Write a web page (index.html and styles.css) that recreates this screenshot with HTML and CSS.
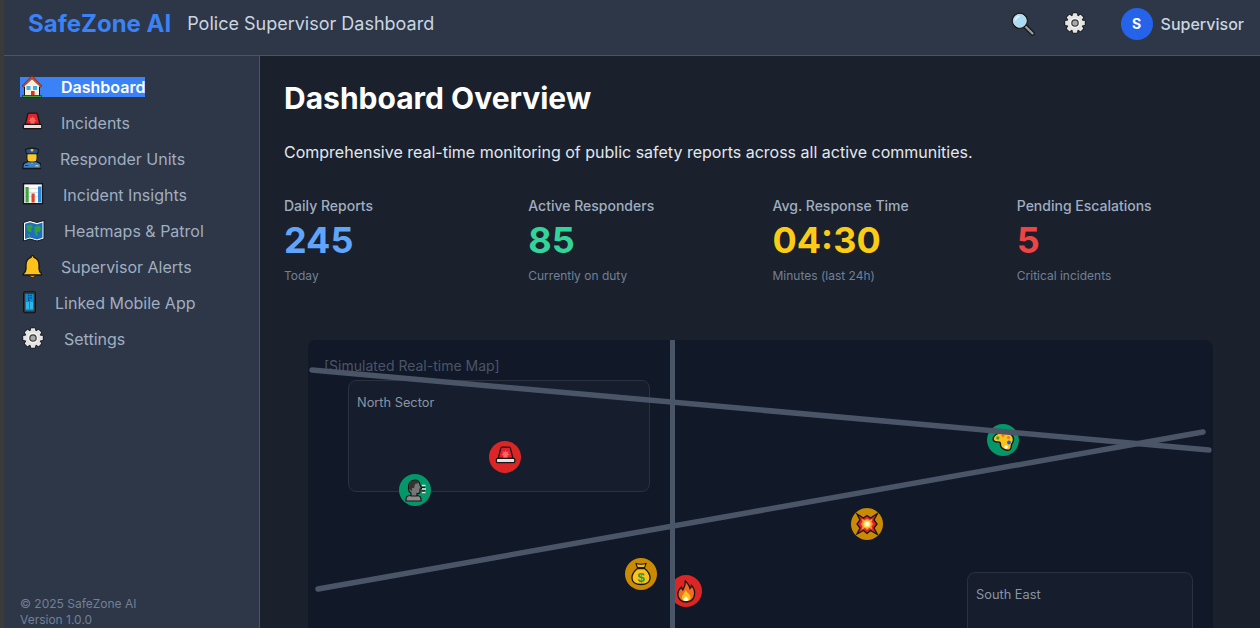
FILE: index.html
```html
<!DOCTYPE html>
<html lang="en">
<head>
<meta charset="utf-8">
<title>SafeZone AI</title>
<link rel="stylesheet" href="styles.css">
</head>
<body>
<svg class="defs" width="0" height="0" aria-hidden="true">
  <defs>
    <g id="gear-shape">
      <circle cx="0" cy="0" r="7.8"/>
      <rect x="-2.200" y="-9.800" width="4.400" height="19.600" rx=".8"/>
      <rect x="-2.200" y="-9.800" width="4.400" height="19.600" rx=".8" transform="rotate(45)"/>
      <rect x="-2.200" y="-9.800" width="4.400" height="19.600" rx=".8" transform="rotate(90)"/>
      <rect x="-2.200" y="-9.800" width="4.400" height="19.600" rx=".8" transform="rotate(135)"/>
    </g>
    <symbol id="i-gear" viewBox="0 0 24 24">
      <g transform="translate(13 11)">
        <use href="#gear-shape" fill="#161616" stroke="#161616" stroke-width="1.600"/>
        <use href="#gear-shape" fill="#e4e4e4"/>
        <circle r="5.200" fill="#f4f4f4"/>
        <circle r="3.800" fill="#3b3b3b"/>
        <circle r="2.600" fill="#a8a8a8"/>
      </g>
    </symbol>
    <symbol id="i-siren" viewBox="0 0 24 24">
      <path d="M5.200 13.500 L7.800 3.200 Q8 2.200 9 2.200 H16.200 Q17.200 2.200 17.400 3.200 L20 13.500 Z" fill="#e5222c" stroke="#161616" stroke-width="1.300"/>
      <path d="M12.500 5.200 l1 2 2-.6-.8 2 1.800 1.200-2 .6.200 2.800h-4.400l.2-2.800-2-.6 1.800-1.200-.8-2 2 .6z" fill="#f8665f"/>
      <rect x="3.400" y="13.400" width="18.400" height="4.200" rx="1.200" fill="#f4dbdb" stroke="#161616" stroke-width="1.300"/>
    </symbol>
  </defs>
</svg>
<div class="app">
  <header class="topbar">
    <div class="brand-group">
      <span class="brand">SafeZone AI</span>
      <span class="subtitle">Police Supervisor Dashboard</span>
    </div>
    <div class="top-actions">
      <svg class="top-search" viewBox="0 0 24 24" width="24" height="24" aria-hidden="true">
        <line x1="14" y1="14" x2="21.500" y2="21.500" stroke="#161616" stroke-width="4.600" stroke-linecap="round"/>
        <line x1="14.500" y1="14.500" x2="21.500" y2="21.500" stroke="#8f9aa3" stroke-width="2.400" stroke-linecap="round"/>
        <circle cx="8.800" cy="8.800" r="7.400" fill="#a9dcf5" stroke="#161616" stroke-width="1.300"/>
        <path d="M4.500 8.500 A4.500 4.500 0 0 1 8.500 4.500" fill="none" stroke="#e8f7ff" stroke-width="1.500"/>
        <circle cx="8.800" cy="8.800" r="6.500" fill="none" stroke="#d7d7d7" stroke-width=".8"/>
      </svg>
      <svg class="top-gear" width="24" height="24" aria-hidden="true"><use href="#i-gear"/></svg>
      <div class="user">
        <span class="avatar">S</span>
        <span class="user-name">Supervisor</span>
      </div>
    </div>
  </header>
  <div class="body-row">
    <aside class="sidebar">
      <nav class="nav">
        <a class="nav-item"><span class="nav-sel">
          <svg class="nav-icon icon-top" viewBox="0 0 22 24" width="22" height="24" aria-hidden="true">
            <rect x="4.500" y="9" width="15" height="12" fill="#fbefdc" stroke="#161616"/>
            <path d="M2 11 L12 .8 L22 11 L20.400 12 L12 4.200 L3.600 12 Z" fill="#c8492f" stroke="#7a2a1e" stroke-width=".8"/>
            <path d="M12 4.200 L20 11.800 H4 Z" fill="#fbefdc"/>
            <rect x="6.500" y="11" width="4" height="4" fill="#35b5ef"/>
            <rect x="13" y="11" width="4" height="4" fill="#35b5ef"/>
            <rect x="11" y="16" width="3.600" height="5" fill="#dc2e2e"/>
            <rect x="2.500" y="20.600" width="19" height="1.600" fill="#3fa535" stroke="#161616" stroke-width=".5"/>
          </svg>
          <span class="nav-label">Dashboard</span></span></a>
        <a class="nav-item">
          <svg class="nav-icon" width="22" height="24" viewBox="0 0 22 24" aria-hidden="true"><use href="#i-siren" width="24" height="24"/></svg>
          <span class="nav-label">Incidents</span></a>
        <a class="nav-item">
          <svg class="nav-icon" viewBox="0 0 21 24" width="21" height="24" aria-hidden="true">
            <path d="M3 21.500 V18.500 Q3 16 6 15.300 L9.500 14 H14.500 L18 15.300 Q21 16 21 18.500 V21.500 Z" fill="#3f83c4" stroke="#161616" stroke-width="1.300"/>
            <path d="M9.500 14 L12 17 L14.500 14" fill="#8cc4ef"/>
            <rect x="5" y="18" width="3.500" height="1" fill="#0f3f6e"/>
            <rect x="15.500" y="18" width="3" height="1.500" fill="#f6c12f"/>
            <rect x="7" y="5" width="10" height="10" rx="3" fill="#fcc72e" stroke="#161616" stroke-width=".9"/>
            <path d="M5.500 2.500 Q12 -.2 18.500 2.500 L17.500 6.800 H6.500 Z" fill="#24558f" stroke="#161616" stroke-width="1.100"/>
            <rect x="10.800" y="2" width="2.400" height="2.400" fill="#f4c430"/>
          </svg>
          <span class="nav-label">Responder Units</span></a>
        <a class="nav-item">
          <svg class="nav-icon" viewBox="0 0 24 24" width="24" height="24" aria-hidden="true">
            <rect x="3.500" y=".7" width="19" height="20" fill="#fafafa" stroke="#161616" stroke-width="1.400"/>
            <path d="M4 5.500H22M4 9.500H22M4 13.500H22" stroke="#c9c9c9" stroke-width=".6"/>
            <rect x="5.500" y="4" width="3.200" height="15.500" fill="#3aa63a"/>
            <rect x="11.500" y="10.500" width="3.200" height="9" fill="#e0442a"/>
            <rect x="18" y="3.500" width="3.400" height="16" fill="#2b87d8"/>
          </svg>
          <span class="nav-label">Incident Insights</span></a>
        <a class="nav-item">
          <svg class="nav-icon" viewBox="0 0 25 24" width="25" height="24" aria-hidden="true">
            <path d="M3.500 3.500 L10 1.500 L17 3.500 L24 1.500 V20 L17 22 L10 20 L3.500 22 Z" fill="#fff" stroke="#161616" stroke-width="1"/>
            <path d="M5 4.800 L10 3.200 L17 5.200 L22.500 3.500 V18.800 L17 20.400 L10 18.400 L5 20 Z" fill="#1c6fc0"/>
            <path d="M6.500 6.500 L11 5.500 L13 8 L11 10 L12 12.500 L9 13 L7 10 Z M14.500 8 L19 6.500 L21 9 L20 12.500 L17 13 L18 16.500 L15.500 17 L14.500 12 Z M8 15 L10 15.500 L9.500 18 L8 17.500 Z" fill="#32a13a"/>
          </svg>
          <span class="nav-label">Heatmaps &amp; Patrol</span></a>
        <a class="nav-item">
          <svg class="nav-icon" viewBox="0 0 22 24" width="22" height="24" aria-hidden="true">
            <path d="M12.500 .7 Q14 .7 14 2.500 Q19 4 19 10 V14 Q19 17 21.800 19 V20 H3.200 V19 Q6 17 6 14 V10 Q6 4 11 2.500 Q11 .7 12.500 .7 Z" fill="#fcc21b" stroke="#161616" stroke-width="1.300"/>
            <path d="M9.500 20.300 H15.500 Q15 22.700 12.500 22.700 Q10 22.700 9.500 20.300 Z" fill="#f08a1d" stroke="#161616" stroke-width=".8"/>
          </svg>
          <span class="nav-label">Supervisor Alerts</span></a>
        <a class="nav-item">
          <svg class="nav-icon" viewBox="0 0 16 24" width="16" height="24" aria-hidden="true">
            <rect x="3.600" y=".7" width="11.800" height="21" rx="1.800" fill="#3a3a3a" stroke="#111" stroke-width="1.100"/>
            <rect x="5.300" y="3" width="8.400" height="16.500" fill="#0a8fd8"/>
            <path d="M8 3.800h1.500v1.500H8zM10.500 3.800H12v1.500h-1.500zM8 6.200h1.500v1.500H8zM10.500 6.200H12v1.500h-1.500zM8 8.600h1.500v1.500H8z" fill="#0b3f68"/>
            <rect x="6" y="11" width="7" height="7" fill="#2bb7f0"/>
            <rect x="9.200" y="11" width=".8" height="7" fill="#0a6da8"/>
          </svg>
          <span class="nav-label">Linked Mobile App</span></a>
        <a class="nav-item">
          <svg class="nav-icon" width="25" height="24" aria-hidden="true"><use href="#i-gear" width="24" height="24"/></svg>
          <span class="nav-label">Settings</span></a>
      </nav>
      <div class="side-foot">
        <div>© 2025 SafeZone AI</div>
        <div>Version 1.0.0</div>
      </div>
    </aside>
    <main class="main">
      <h1 class="title">Dashboard Overview</h1>
      <p class="intro">Comprehensive real-time monitoring of public safety reports across all active communities.</p>
      <section class="stats">
        <div class="stat"><div class="stat-label">Daily Reports</div><div class="stat-value blue">245</div><div class="stat-note">Today</div></div>
        <div class="stat"><div class="stat-label">Active Responders</div><div class="stat-value green">85</div><div class="stat-note">Currently on duty</div></div>
        <div class="stat"><div class="stat-label">Avg. Response Time</div><div class="stat-value yellow">04:30</div><div class="stat-note">Minutes (last 24h)</div></div>
        <div class="stat"><div class="stat-label">Pending Escalations</div><div class="stat-value red">5</div><div class="stat-note">Critical incidents</div></div>
      </section>
      <section class="map">
        <div class="map-caption">[Simulated Real-time Map]</div>
        <div class="sector sector-north">North Sector</div>
        <div class="sector sector-east">South East</div>
        <span class="marker m-red m-1"><svg width="24" height="24" aria-hidden="true"><use href="#i-siren" width="24" height="24"/></svg></span>
        <span class="marker m-green m-2">
          <svg viewBox="0 0 24 24" width="24" height="24" aria-hidden="true">
            <path d="M3 23 V21 Q3 18 7 17.500 H14 Q18 18 18 21 V23 Z" fill="#8a8a8a" stroke="#161616" stroke-width="1.200"/>
            <path d="M5.500 11 Q4.500 2.500 12 2 Q16.500 2 17 7 L18.800 10.500 L17 11 V14 Q16.500 16 14 15.500 V18 H8 V15 Q5.500 13.500 5.500 11 Z" fill="#767676" stroke="#161616" stroke-width="1.200"/>
            <path d="M6 11 Q5 3.500 12 2.600 Q15 2.600 16 5 L12 6 L11 10 L9 10 L9 13 Z" fill="#333"/>
            <path d="M19 7.500 h3.500 M19 11 h4 M19 14.500 h3.500" stroke="#e6e6e6" stroke-width="1.400"/>
            <path d="M18.500 9.300 L22 9.300 M18.500 12.800 L22 12.800" stroke="#161616" stroke-width="1.200"/>
          </svg>
        </span>
        <span class="marker m-green m-3">
          <svg viewBox="0 0 24 24" width="24" height="24" aria-hidden="true">
            <path d="M12 4 C18 3.500 22.500 7 22.500 11.500 C22.500 14 21 15 20.500 17 C20 19.500 20.500 20 19 21.500 C17 23 13 22 10.500 19.500 C8.800 17.500 10 16 9 14.500 C7.800 13 5 15 3 13 C1 11 2.500 8.500 5 6.500 C7 5 9 4.200 12 4 Z" fill="#fcc21b" stroke="#161616" stroke-width="1.400"/>
            <circle cx="6.800" cy="10" r="1.700" fill="#37a63a"/>
            <circle cx="12" cy="7.500" r="1.500" fill="#ef7d1a"/>
            <circle cx="17.500" cy="9.500" r="1.500" fill="#ef7d1a"/>
            <circle cx="18" cy="14.500" r="1.900" fill="#1e5fd6"/>
            <circle cx="15" cy="19" r="1.700" fill="#fff"/>
          </svg>
        </span>
        <span class="marker m-amber m-4">
          <svg viewBox="0 0 24 24" width="24" height="24" aria-hidden="true">
            <path d="M2 2 L8.500 6 L12 3.500 L15.500 6 L22.500 1.500 L19 8 L22 12 L19 16 L22.500 22.500 L15.500 18.500 L12 21.500 L8.500 18.500 L2 22 L5 16 L2 12 L5 8 Z" fill="#e3222c" stroke="#161616" stroke-width="1.300"/>
            <path d="M6.500 7 L10 8 L12 6.500 L14.500 8 L17.500 7 L16.500 10 L18 12 L16.500 14.500 L17.500 17.500 L14.500 16 L12 18 L10 16 L6.500 17.500 L7.500 14.500 L6 12 L7.500 10 Z" fill="#fb9a2b"/>
            <circle cx="12" cy="12" r="3.600" fill="#fde25a"/>
            <circle cx="12" cy="12" r="2" fill="#fffbe6"/>
          </svg>
        </span>
        <span class="marker m-amber m-5">
          <svg viewBox="0 0 24 24" width="24" height="24" aria-hidden="true">
            <path d="M7 1.500 Q12 3 17 1.500 L15.500 6 H8.500 Z" fill="#f6b91b" stroke="#161616" stroke-width="1.100"/>
            <path d="M8.500 6.500 H15.500 Q21.500 11 21 16.500 Q20.500 22.500 12 22.500 Q3.500 22.500 3 16.500 Q2.500 11 8.500 6.500 Z" fill="#fcc21b" stroke="#161616" stroke-width="1.300"/>
            <rect x="8" y="5" width="8" height="1.600" fill="#161616"/>
            <text class="dollar" x="12" y="19.500" text-anchor="middle">$</text>
          </svg>
        </span>
        <span class="marker m-red m-6">
          <svg viewBox="0 0 24 24" width="24" height="24" aria-hidden="true">
            <path d="M11 1.500 C14 5 15.500 6.500 16 9.500 C17 8.500 17.500 7.500 17.500 6.500 C20.500 9.500 21 13 20.500 16 C19.500 21 16 23 12 23 C7.500 23 4 20 3.800 15.500 C3.600 11.500 6 9.500 7.500 8 C8 9.500 8 10.500 8.800 11 C10.500 8 12 5 11 1.500 Z" fill="#f26b21" stroke="#161616" stroke-width="1.300"/>
            <path d="M11.500 11 C13 14 16.500 15 16.500 18.500 C16.500 21 14.500 22 12 22 C9.500 22 7.800 20.500 7.800 18.500 C7.800 16 10.500 14.500 11.500 11 Z" fill="#fcc21b"/>
            <path d="M12 17 C13 18.500 14.500 19.500 14.500 20.800 C14 21.800 13 22 12 22 C11 22 10 21.800 9.500 20.800 C9.500 19.500 11.500 18.500 12 17 Z" fill="#fff8e0"/>
          </svg>
        </span>
        <svg class="roads" viewBox="0 0 905 400" width="905" height="400" aria-hidden="true">
          <line x1="4" y1="30" x2="901" y2="110"/>
          <line x1="10" y1="249" x2="895" y2="92"/>
          <line class="road-v" x1="364.500" y1="0" x2="364.500" y2="400"/>
        </svg>
      </section>
    </main>
  </div>
</div>
</body>
</html>
```
FILE: styles.css
```css
* { box-sizing: border-box; }
html, body { margin: 0; height: 100%; overflow: hidden; }
body {
  font-family: Inter, "Noto Sans", sans-serif;
  background: #3a3a3a;
  color: #e2e8f0;
}
.defs { position: absolute; }
.app {
  margin-left: 4px;
  height: 628px;
  display: flex;
  flex-direction: column;
  overflow: hidden;
}
.topbar {
  height: 56px;
  flex: none;
  background: #2d3748;
  border-bottom: 1px solid #4a5568;
  display: flex;
  align-items: center;
  justify-content: space-between;
  padding: 0 16px 8px 24px;
}
.brand-group { display: flex; align-items: center; gap: 16px; }
.brand { font-size: 24px; font-weight: 700; color: #3b82f6; }
.subtitle { font-size: 18px; font-weight: 400; color: #cbd5e0; }
.top-actions { display: flex; align-items: center; }
.top-search { margin-right: 27px; }
.top-gear { margin-right: 35px; }
.user { display: flex; align-items: center; gap: 8px; }
.avatar {
  width: 32px; height: 32px; border-radius: 50%;
  background: #2563eb; color: #fff;
  display: flex; align-items: center; justify-content: center;
  font-size: 14px; font-weight: 700;
}
.user-name { font-size: 16px; font-weight: 500; color: #cbd5e0; }
.body-row { flex: 1; display: flex; min-height: 0; }
.sidebar {
  width: 256px; flex: none;
  background: #2d3748;
  border-right: 1px solid #4a5568;
  padding: 13px 16px 0;
  display: flex; flex-direction: column; justify-content: space-between;
}
.nav { display: flex; flex-direction: column; }
.nav-item {
  height: 36px; display: flex; align-items: center;
  font-size: 16px; font-weight: 400; color: #a0aec0;
}
.nav-sel { display: flex; align-items: center; background: #3b82f6; color: #fff; height: 20px; font-weight: 600; }
.nav-icon { flex: none; margin-right: 19px; }
.side-foot { font-size: 12px; line-height: 16px; color: #718096; height: 32px; }
.main {
  flex: 1; min-width: 0;
  background: #1a202c;
  padding: 24px 23px 24px 24px;
  overflow: hidden;
}
.title { margin: 0; font-size: 30px; line-height: 36px; font-weight: 700; color: #fff; }
.intro { margin: 24px 0 0; font-size: 16px; line-height: 24px; color: #e2e8f0; }
.stats { display: grid; grid-template-columns: repeat(4, 1fr); gap: 24px; margin-top: 32px; }
.stat-label { font-size: 14px; line-height: 20px; font-weight: 500; color: #a0aec0; }
.stat-value { font-size: 36px; line-height: 40px; font-weight: 700; margin-top: 4px; }
.stat-note { font-size: 12px; line-height: 16px; color: #718096; margin-top: 8px; }
.blue { color: #60a5fa; }
.green { color: #34d399; }
.yellow { color: #facc15; }
.red { color: #ef4444; }
.map {
  position: relative;
  margin: 56px 24px 0;
  height: 400px;
  background: #111827;
  border-radius: 8px;
}
.map-caption { position: absolute; left: 16px; top: 16px; font-size: 14px; line-height: 20px; color: #4a5568; }
.sector {
  position: absolute;
  padding: 12px 8px;
  font-size: 12.800px; line-height: 20px;
  color: #8a94a3;
  background: rgba(45, 55, 72, 0.2);
  border: 1px solid #2a3240;
  border-radius: 8px;
}
.sector-north { left: 40px; top: 40px; width: 302px; height: 112px; }
.sector-east { left: 659px; top: 232px; width: 226px; height: 120px; }
.marker {
  position: absolute;
  width: 32px; height: 32px; border-radius: 50%;
  display: flex; align-items: center; justify-content: center;
}
.m-red { background: #dc2626; }
.m-green { background: #059669; }
.m-amber { background: #ca8a04; }
.m-1 { left: 181px; top: 101px; }
.m-2 { left: 91px; top: 134px; }
.m-3 { left: 679px; top: 84px; }
.m-4 { left: 543px; top: 168px; }
.m-5 { left: 317px; top: 218px; }
.m-6 { left: 362px; top: 235px; }
.marker svg { flex: none; }
.dollar { font-family: "Liberation Sans", sans-serif; font-size: 13px; font-weight: 700; fill: #1f9d3a; }
.roads { position: absolute; left: 0; top: 0; pointer-events: none; }
.roads line { stroke: #4a5568; stroke-width: 5.500; stroke-linecap: round; }
.roads .road-v { stroke-width: 5; }
```
